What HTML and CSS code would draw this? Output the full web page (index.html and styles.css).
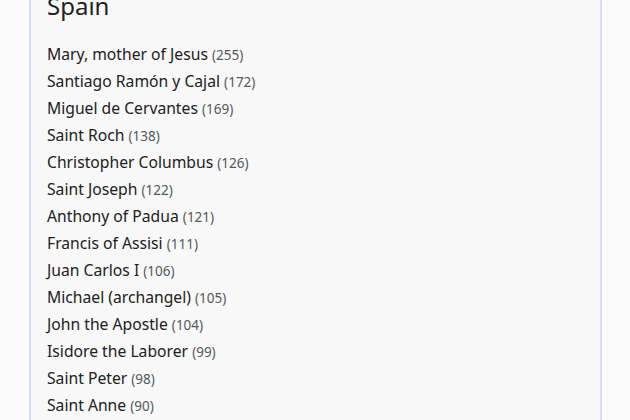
FILE: index.html
```html
<!DOCTYPE html>
<html lang="en">
<head>
<meta charset="utf-8">
<title>Spain</title>
<link rel="stylesheet" href="styles.css">
</head>
<body>
<section class="card">
  <h2 class="title">Spain</h2>
  <ul class="list">
    <li>Mary, mother of Jesus <span class="count">(255)</span></li>
    <li>Santiago Ramón y Cajal <span class="count">(172)</span></li>
    <li>Miguel de Cervantes <span class="count">(169)</span></li>
    <li>Saint Roch <span class="count">(138)</span></li>
    <li>Christopher Columbus <span class="count">(126)</span></li>
    <li>Saint Joseph <span class="count">(122)</span></li>
    <li>Anthony of Padua <span class="count">(121)</span></li>
    <li>Francis of Assisi <span class="count">(111)</span></li>
    <li>Juan Carlos I <span class="count">(106)</span></li>
    <li>Michael (archangel) <span class="count">(105)</span></li>
    <li>John the Apostle <span class="count">(104)</span></li>
    <li>Isidore the Laborer <span class="count">(99)</span></li>
    <li>Saint Peter <span class="count">(98)</span></li>
    <li>Saint Anne <span class="count">(90)</span></li>
  </ul>
</section>
</body>
</html>
```
FILE: styles.css
```css
html, body {
  margin: 0;
  padding: 0;
  background: #fbfbfb;
}
body {
  font-family: "Noto Sans", "Open Sans", sans-serif;
  color: #202122;
  overflow: hidden;
  height: 420px;
}
.card {
  margin: -15px 28px 0 29px;
  background: #f8f8f8;
  border-left: 2px solid #d5def5;
  border-right: 2px solid #d5def5;
  padding: 0 16px;
  min-height: 440px;
}
.title {
  margin: 0;
  font-size: 24px;
  font-weight: 400;
  line-height: 42px;
}
.list {
  list-style: none;
  margin: 0;
  padding: 14px 0 0 0;
}
.list li {
  font-size: 15.7px;
  line-height: 27px;
}
.count {
  font-size: 13.5px;
  line-height: 1;
  color: #54595d;
}
```
